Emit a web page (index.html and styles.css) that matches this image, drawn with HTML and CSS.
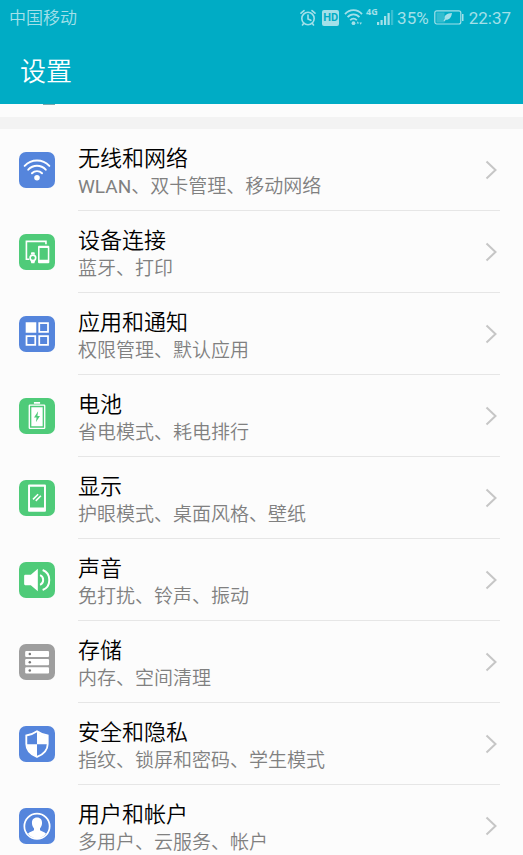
FILE: index.html
```html
<!DOCTYPE html>
<html lang="zh-CN">
<head>
<meta charset="utf-8">
<meta name="viewport" content="width=device-width, initial-scale=1">
<title>设置</title>
<link rel="stylesheet" href="styles.css">
</head>
<body>
<header class="top">
  <div class="status">
    <span class="carrier">中国移动</span>
    <div class="indicators">
      <svg class="alarm" width="16" height="18" viewBox="0 0 16 18" fill="none" stroke="currentColor" stroke-width="1.600" stroke-linecap="round"><circle cx="8" cy="9.500" r="6.200"/><path d="M8 6v4l2.800 1.300M1 4.200 4 1.600M15 4.200 12 1.600M3.600 14.500 2.500 16M12.400 14.500l1.100 1.500"/></svg>
      <span class="hd">HD</span>
      <svg class="wifi" width="19" height="18" viewBox="0 0 19 18" fill="none" stroke="currentColor" stroke-width="1.800"><path d="M1 5.200C5.500 -.2 13.500 -.2 18 5.200M3.600 8.200c3.200-3.800 8.600-3.800 11.800 0M6.200 11.200c1.800-2.200 4.800-2.200 6.600 0"/><circle cx="9.500" cy="14.200" r="1.900" fill="currentColor" stroke="none"/><path d="m12.600 14.500 1.200-2.200 1.200 2.200zM15.500 13.500h2.400l-1.200 2.200z" fill="currentColor" stroke="none"/></svg>
      <span class="net">4G</span>
      <svg class="signal" width="17" height="18" viewBox="0 0 17 18" fill="currentColor"><path d="M0 13h2.200v3H0zM3.500 11h2.200v5H3.500zM7 7h2.200v9H7zM10.500 4h2.200v12h-2.200z"/><path d="M14 1h2.200v15H14z" opacity=".35"/></svg>
      <span class="percent">35%</span>
      <svg class="battery" width="30" height="18" viewBox="0 0 30 18"><rect x=".8" y="1.800" width="26" height="13.200" rx="2" fill="none" stroke="currentColor" stroke-width="1.200"/><path d="M2.500 3.500h8v10h-8z" fill="currentColor" opacity=".3"/><path d="M28 5h1.500v7H28z" fill="currentColor"/><path d="M18 4c-5 .5-8 2-7.300 5.600L9.500 12l1.200.3 1.100-1.500C15.500 11 17.300 8.500 18 4z" fill="currentColor"/></svg>
      <time>22:37</time>
    </div>
  </div>
  <h1>设置</h1>
</header>
<main>
  <div class="previous"></div>
  <nav class="list">
    <a class="row" href="#network">
      <svg class="icon blue" viewBox="0 0 35 35"><g fill="none" stroke="#fff" stroke-width="1.900" stroke-linecap="round"><path d="M5.500 13.500c6.600-7 17.400-7 24 0M9 17.200c4.700-5 12.300-5 17 0M12.600 20.700c2.700-2.800 7.100-2.800 9.800 0"/></g><circle cx="17.500" cy="25" r="2.700" fill="#fff"/></svg>
      <span class="body"><span class="text"><span class="title">无线和网络</span><span class="sub"><span class="latin">WLAN</span>、双卡管理、移动网络</span></span><svg class="chevron" viewBox="0 0 12 20"><path d="m1.500 1.500 9 8.500-9 8.500"/></svg></span>
    </a>
    <a class="row" href="#devices">
      <svg class="icon green" viewBox="0 0 35 35"><path d="M10 24.500H7.200V7.200h19V10" fill="none" stroke="#fff" stroke-width="1.600"/><path fill="#fff" fill-rule="evenodd" d="M19.500 11.500h9a1 1 0 0 1 1 1V27.500a1 1 0 0 1-1 1h-9a1 1 0 0 1-1-1V12.500a1 1 0 0 1 1-1zM20 13.500V25h8V13.500z"/><path d="M12 17.800h3l.6 2.200h-4.200zM12 28.500h3l.6-2.200h-4.200z" fill="#fff"/><circle cx="13.500" cy="23.200" r="2.700" fill="none" stroke="#fff" stroke-width="1.600"/></svg>
      <span class="body"><span class="text"><span class="title">设备连接</span><span class="sub">蓝牙、打印</span></span><svg class="chevron" viewBox="0 0 12 20"><path d="m1.500 1.500 9 8.500-9 8.500"/></svg></span>
    </a>
    <a class="row" href="#apps">
      <svg class="icon blue" viewBox="0 0 35 35"><path d="M6.500 6h10.300v10.300H6.500z" fill="#fff"/><path d="M19.700 7h8.500v8.500h-8.500zM7.300 19.500h8.500V28H7.300zM19.700 19.500h8.500V28h-8.500z" fill="none" stroke="#fff" stroke-width="1.700"/></svg>
      <span class="body"><span class="text"><span class="title">应用和通知</span><span class="sub">权限管理、默认应用</span></span><svg class="chevron" viewBox="0 0 12 20"><path d="m1.500 1.500 9 8.500-9 8.500"/></svg></span>
    </a>
    <a class="row" href="#battery">
      <svg class="icon green" viewBox="0 0 35 35"><path d="M14.500 4h6v1.500h-6z" fill="#fff"/><rect x="10" y="7" width="15" height="22.500" rx=".6" fill="none" stroke="#fff" stroke-width="1.300"/><path d="M12 9h11v18.500H12z" fill="#fff"/><path d="m18.600 13-4 6h2.500l-.7 4.500 4-6h-2.500z" fill="#4fcb79"/></svg>
      <span class="body"><span class="text"><span class="title">电池</span><span class="sub">省电模式、耗电排行</span></span><svg class="chevron" viewBox="0 0 12 20"><path d="m1.500 1.500 9 8.500-9 8.500"/></svg></span>
    </a>
    <a class="row" href="#display">
      <svg class="icon green" viewBox="0 0 35 35"><path fill="#fff" fill-rule="evenodd" d="M9.800 4.300h15.400a1 1 0 0 1 1 1v24.600a1 1 0 0 1-1 1H9.800a1 1 0 0 1-1-1V5.300a1 1 0 0 1 1-1zM10.700 6.500v20.300h13.600V6.500z"/><path d="m13.600 18.800 5-5M16.300 20.300l5-5" stroke="#fff" stroke-width="1.500"/></svg>
      <span class="body"><span class="text"><span class="title">显示</span><span class="sub">护眼模式、桌面风格、壁纸</span></span><svg class="chevron" viewBox="0 0 12 20"><path d="m1.500 1.500 9 8.500-9 8.500"/></svg></span>
    </a>
    <a class="row" href="#sound">
      <svg class="icon green" viewBox="0 0 35 35"><path d="M6 12.500h5.500L18.300 6.500V28.500l-6.800-6H6a1 1 0 0 1-1-1v-8a1 1 0 0 1 1-1z" fill="#fff"/><path d="M20.500 12.800c4 1.500 4 7.900 0 9.400M23 7.800c8.600 3.200 8.600 16.200 0 19.400" fill="none" stroke="#fff" stroke-width="1.900"/></svg>
      <span class="body"><span class="text"><span class="title">声音</span><span class="sub">免打扰、铃声、振动</span></span><svg class="chevron" viewBox="0 0 12 20"><path d="m1.500 1.500 9 8.500-9 8.500"/></svg></span>
    </a>
    <a class="row" href="#storage">
      <svg class="icon gray" viewBox="0 0 35 35"><g fill="#fff"><rect x="6" y="6.700" width="23.200" height="6" rx="1"/><rect x="6" y="14.700" width="23.200" height="6" rx="1"/><rect x="6" y="22.700" width="23.200" height="6" rx="1"/></g><g fill="#777"><circle cx="10.500" cy="9.700" r="1.200"/><circle cx="10.500" cy="17.700" r="1.200"/><circle cx="10.500" cy="25.700" r="1.200"/></g></svg>
      <span class="body"><span class="text"><span class="title">存储</span><span class="sub">内存、空间清理</span></span><svg class="chevron" viewBox="0 0 12 20"><path d="m1.500 1.500 9 8.500-9 8.500"/></svg></span>
    </a>
    <a class="row" href="#security">
      <svg class="icon blue" viewBox="0 0 35 35"><path d="M17.500 5.200c3.300 2.400 6.500 3.600 10.400 4v8.200c0 6.200-4.400 10.200-10.400 12.700-6-2.500-10.400-6.500-10.400-12.700V9.200c3.900-.4 7.100-1.600 10.400-4z" fill="none" stroke="#fff" stroke-width="1.800"/><path d="M17.500 5.500v12.300H28V9.300c-4-.5-7.300-1.700-10.500-3.800zM17.500 17.800H7.300c.3 5.700 4.500 9.700 10.200 12.100z" fill="#fff"/></svg>
      <span class="body"><span class="text"><span class="title">安全和隐私</span><span class="sub">指纹、锁屏和密码、学生模式</span></span><svg class="chevron" viewBox="0 0 12 20"><path d="m1.500 1.500 9 8.500-9 8.500"/></svg></span>
    </a>
    <a class="row" href="#accounts">
      <svg class="icon blue" viewBox="0 0 35 35"><circle cx="17.500" cy="17.800" r="12.300" fill="none" stroke="#fff" stroke-width="1.700"/><path d="M17.500 9.300c3.300 0 5 2.200 4.900 5.300 0 2.200-.8 4-2 5.300v1.800c1.700 1.100 4.300 1.500 5.900 3.300-4.600 6.100-13 6.100-17.600 0 1.600-1.800 4.200-2.200 5.900-3.300v-1.800c-1.200-1.300-2-3.100-2-5.300-.1-3.100 1.600-5.300 4.900-5.300z" fill="#fff"/></svg>
      <span class="body"><span class="text"><span class="title">用户和帐户</span><span class="sub">多用户、云服务、帐户</span></span><svg class="chevron" viewBox="0 0 12 20"><path d="m1.500 1.500 9 8.500-9 8.500"/></svg></span>
    </a>
  </nav>
</main>
</body>
</html>
```
FILE: styles.css
```css
* { box-sizing: border-box; }
html { height: 100%; overflow: hidden; }
body {
  height: 100%;
  margin: 0;
  overflow: hidden;
  background: #fcfcfc;
  color: #111;
  font-family: Roboto, "Noto Sans CJK SC", sans-serif;
}
.top {
  background: #00acc5;
  color: #fff;
}
.status {
  display: flex;
  align-items: center;
  justify-content: space-between;
  height: 36px;
  padding: 0 12px 0 9px;
  color: #a3e0e9;
  font-size: 17px;
  line-height: 36px;
}
.carrier { font-weight: 350; }
.indicators { display: flex; align-items: center; height: 34px; }
.indicators svg { flex: none; }
.hd {
  margin: 0 5px 0 6px;
  width: 17px;
  border-radius: 2px;
  background: #a3e0e9;
  color: #00acc5;
  font-size: 11px;
  font-weight: 700;
  line-height: 16px;
  text-align: center;
}
.net {
  align-self: flex-start;
  margin: 6px 0 0 3px;
  width: 11px;
  font-family: "Open Sans", sans-serif;
  font-size: 9px;
  font-weight: 700;
  line-height: 10px;
}
.percent { margin: 0 5px 0 3px; }
.battery { margin-right: 5px; }
h1 {
  margin: 0;
  padding: 17px 20px 13px;
  font-size: 26px;
  font-weight: 350;
  line-height: 38px;
}
.previous {
  height: 25px;
  border-bottom: 12px solid #f3f3f3;
}
.previous::before {
  content: "";
  display: block;
  width: 12px;
  height: 1px;
  margin-left: 43px;
  background: #7fa9ad;
}
.row {
  display: flex;
  align-items: center;
  gap: 23px;
  height: 82px;
  padding-left: 19px;
  color: inherit;
  text-decoration: none;
}
.icon {
  flex: none;
  width: 36px;
  height: 36px;
  border-radius: 7px;
}
.blue { background: #5585dc; }
.green { background: #4fcb79; }
.gray { background: #9e9e9e; }
.body {
  display: flex;
  flex: 1;
  align-items: center;
  justify-content: space-between;
  height: 100%;
  margin-right: 23px;
  padding-right: 3px;
  border-bottom: 1px solid #e6e6e6;
}
.row:last-child .body { border-color: transparent; }
.text { display: flex; flex-direction: column; padding-top: 6px; }
.title { color: #000; font-size: 22px; font-weight: 350; line-height: 28px; }
.sub { color: #808080; font-size: 19px; font-weight: 350; line-height: 28px; }
.latin { font-weight: 400; }
.chevron {
  flex: none;
  width: 12px;
  height: 20px;
  fill: none;
  stroke: #c6c6c6;
  stroke-width: 2;
}
```
